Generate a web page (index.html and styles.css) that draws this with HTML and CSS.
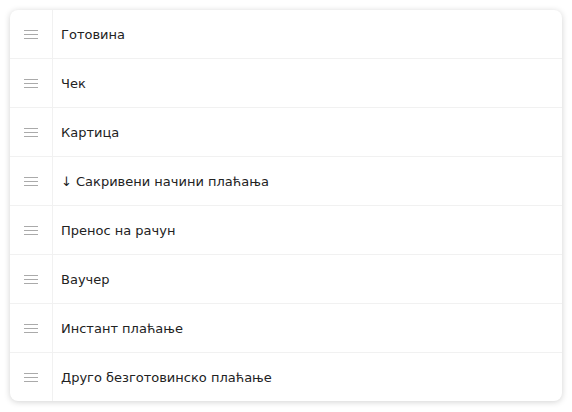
FILE: index.html
```html
<!DOCTYPE html>
<html lang="sr">
<head>
<meta charset="utf-8">
<link rel="stylesheet" href="styles.css">
</head>
<body>
<div class="card">
  <div class="row"><div class="handle"><span class="bars"></span></div><div class="label">Готовина</div></div>
  <div class="row"><div class="handle"><span class="bars"></span></div><div class="label">Чек</div></div>
  <div class="row"><div class="handle"><span class="bars"></span></div><div class="label">Картица</div></div>
  <div class="row"><div class="handle"><span class="bars"></span></div><div class="label">↓ Сакривени начини плаћања</div></div>
  <div class="row"><div class="handle"><span class="bars"></span></div><div class="label">Пренос на рачун</div></div>
  <div class="row"><div class="handle"><span class="bars"></span></div><div class="label">Ваучер</div></div>
  <div class="row"><div class="handle"><span class="bars"></span></div><div class="label">Инстант плаћање</div></div>
  <div class="row"><div class="handle"><span class="bars"></span></div><div class="label">Друго безготовинско плаћање</div></div>
</div>
</body>
</html>
```
FILE: styles.css
```css
html, body { margin: 0; padding: 0; background: #fff; }
body { padding: 10px; font-family: "DejaVu Sans", sans-serif; }
.card {
  width: 552px;
  background: #fff;
  border-radius: 8px;
  box-shadow: 0 1px 6px rgba(0,0,0,0.18);
  overflow: hidden;
}
.row {
  display: flex;
  height: 48px;
  border-bottom: 1px solid #f1f1f1;
}
.row:last-child { border-bottom: none; }
.handle {
  width: 42px;
  border-right: 1px solid #f1f1f1;
  display: flex;
  align-items: center;
  justify-content: center;
}
.bars {
  width: 14px;
  height: 9px;
  border-top: 1px solid #aaa;
  border-bottom: 1px solid #aaa;
  position: relative;
  box-sizing: border-box;
}
.bars::after {
  content: "";
  position: absolute;
  left: 0; right: 0; top: 3px;
  height: 1px;
  background: #aaa;
}
.label {
  display: flex;
  align-items: center;
  padding-left: 8px;
  font-size: 13px;
  color: #222;
}
```
